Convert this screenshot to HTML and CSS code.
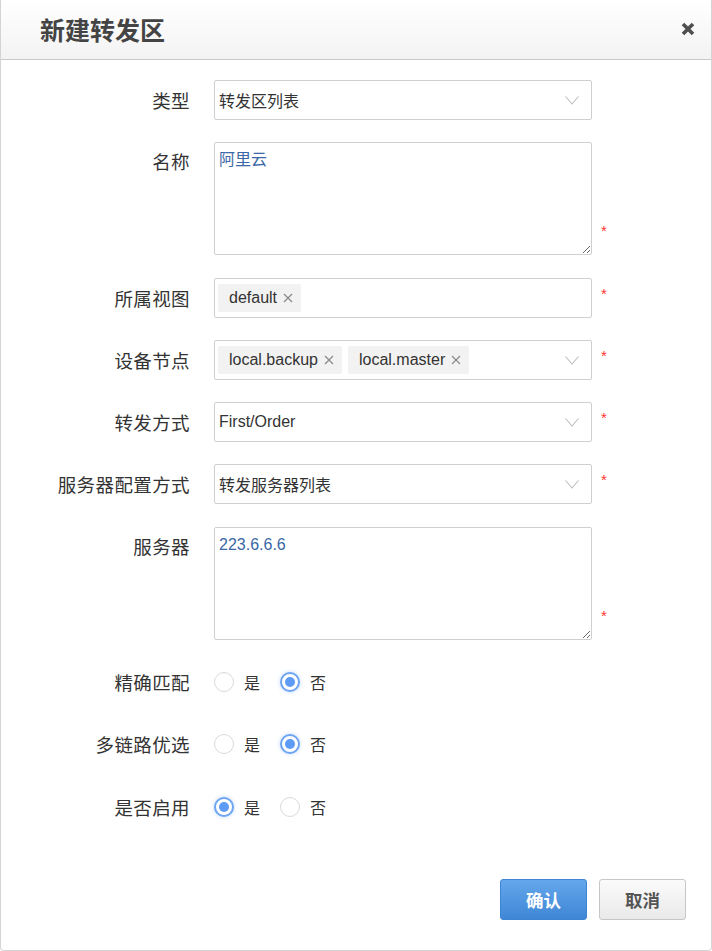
FILE: index.html
```html
<!DOCTYPE html>
<html lang="zh-CN">
<head>
<meta charset="utf-8">
<title>新建转发区</title>
<link rel="stylesheet" href="styles.css">
</head>
<body>
<div class="dialog">
  <div class="dialog-header">
    <h1 class="dialog-title">新建转发区</h1>
    <span class="close" aria-label="关闭">
      <svg width="14" height="14" viewBox="0 0 14 14"><path d="M2 2 L12 12 M12 2 L2 12" stroke="#4f4f4f" stroke-width="3.6" stroke-linecap="butt"/></svg>
    </span>
  </div>
  <div class="dialog-body">
    <div class="row">
      <label class="label">类型</label>
      <div class="control select">
        <span class="value">转发区列表</span>
        <svg class="chev" width="14" height="9" viewBox="0 0 14 9"><path d="M0.5 0.5 L7 8 L13.5 0.5" fill="none" stroke="#bdbdbd" stroke-width="1.1"/></svg>
      </div>
    </div>
    <div class="row">
      <label class="label tall">名称</label>
      <textarea class="control area">阿里云</textarea>
      <span class="star">*</span>
    </div>
    <div class="row">
      <label class="label">所属视图</label>
      <div class="control tags">
        <span class="tag">default<svg class="x" width="10" height="10" viewBox="0 0 10 10"><path d="M1 1 L9 9 M9 1 L1 9" stroke="#8a8a8a" stroke-width="1.2"/></svg></span>
      </div>
      <span class="star">*</span>
    </div>
    <div class="row">
      <label class="label">设备节点</label>
      <div class="control tags select">
        <span class="tag">local.backup<svg class="x" width="10" height="10" viewBox="0 0 10 10"><path d="M1 1 L9 9 M9 1 L1 9" stroke="#8a8a8a" stroke-width="1.2"/></svg></span>
        <span class="tag">local.master<svg class="x" width="10" height="10" viewBox="0 0 10 10"><path d="M1 1 L9 9 M9 1 L1 9" stroke="#8a8a8a" stroke-width="1.2"/></svg></span>
        <svg class="chev" width="14" height="9" viewBox="0 0 14 9"><path d="M0.5 0.5 L7 8 L13.5 0.5" fill="none" stroke="#bdbdbd" stroke-width="1.1"/></svg>
      </div>
      <span class="star">*</span>
    </div>
    <div class="row">
      <label class="label">转发方式</label>
      <div class="control select">
        <span class="value">First/Order</span>
        <svg class="chev" width="14" height="9" viewBox="0 0 14 9"><path d="M0.5 0.5 L7 8 L13.5 0.5" fill="none" stroke="#bdbdbd" stroke-width="1.1"/></svg>
      </div>
      <span class="star">*</span>
    </div>
    <div class="row">
      <label class="label">服务器配置方式</label>
      <div class="control select">
        <span class="value">转发服务器列表</span>
        <svg class="chev" width="14" height="9" viewBox="0 0 14 9"><path d="M0.5 0.5 L7 8 L13.5 0.5" fill="none" stroke="#bdbdbd" stroke-width="1.1"/></svg>
      </div>
      <span class="star">*</span>
    </div>
    <div class="row">
      <label class="label tall">服务器</label>
      <textarea class="control area">223.6.6.6</textarea>
      <span class="star">*</span>
    </div>
    <div class="row">
      <label class="label">精确匹配</label>
      <div class="radios">
        <span class="radio"><span class="dot"></span>是</span>
        <span class="radio"><span class="dot on"></span>否</span>
      </div>
    </div>
    <div class="row">
      <label class="label">多链路优选</label>
      <div class="radios">
        <span class="radio"><span class="dot"></span>是</span>
        <span class="radio"><span class="dot on"></span>否</span>
      </div>
    </div>
    <div class="row">
      <label class="label">是否启用</label>
      <div class="radios">
        <span class="radio"><span class="dot on"></span>是</span>
        <span class="radio"><span class="dot"></span>否</span>
      </div>
    </div>
  </div>
  <div class="dialog-footer">
    <button class="btn primary">确认</button>
    <button class="btn">取消</button>
  </div>
</div>
</body>
</html>
```

FILE: styles.css
```css
* { box-sizing: border-box; }
html, body { margin: 0; padding: 0; }
body {
  font-family: "Liberation Sans", "Noto Sans CJK SC", sans-serif;
  color: #333;
  background: #fff;
}
.dialog {
  height: 951px;
  border: 1px solid #d4d4d4;
  border-top: 0;
  border-radius: 0 0 4px 4px;
  display: flex;
  flex-direction: column;
  background: #fff;
}
.dialog-header {
  height: 60px;
  border-bottom: 1px solid #c9c9c9;
  background: linear-gradient(#ffffff, #f3f3f3);
  display: flex;
  align-items: center;
  justify-content: space-between;
  padding: 0 16px 2px 39px;
}
.dialog-title {
  margin: 0;
  font-family: "Noto Sans CJK SC", sans-serif;
  font-size: 25px;
  font-weight: 700;
  color: #444;
}
.close { display: flex; }
.dialog-body {
  padding-top: 20px;
  display: flex;
  flex-direction: column;
  gap: 22.3px;
}
.row {
  display: flex;
  align-items: flex-start;
}
.label {
  width: 189px;
  text-align: right;
  font-size: 18.5px;
  letter-spacing: 0.4px;
  line-height: 40px;
  color: #333;
  margin-right: 24px;
  font-family: "Noto Sans CJK SC", sans-serif;
}
.label.tall { line-height: 38px; }
.control {
  width: 378px;
  height: 40px;
  border: 1px solid #cfcfcf;
  border-radius: 2px;
  background: #fff;
  font-size: 16px;
  font-family: "Liberation Sans", "Noto Sans CJK SC", sans-serif;
  color: #333;
}
.select {
  display: flex;
  align-items: center;
  padding: 0 12px 0 4px;
}
.select .value { flex: 1; }
.chev { margin-left: auto; margin-top: 1px; }
.area {
  height: 113px;
  resize: vertical;
  padding: 6px 4px;
  color: #3b68a6;
  line-height: 22px;
  display: block;
  outline: none;
}
.tags {
  display: flex;
  align-items: center;
  gap: 6px;
  padding: 0 12px 0 3px;
}
.tag {
  background: #f2f2f2;
  height: 28px;
  line-height: 28px;
  padding: 0 8px 0 11px;
  font-size: 16px;
  color: #333;
  border-radius: 2px;
  display: inline-flex;
  align-items: center;
}
.tag .x { margin-left: 6px; }
.star {
  align-self: flex-end;
  height: 40px;
  margin-left: 9px;
  color: #f33;
  font-size: 15px;
  line-height: 32px;
}
.radios {
  display: flex;
  align-items: center;
  height: 40px;
}
.radio {
  display: flex;
  align-items: center;
  font-size: 16px;
  font-family: "Noto Sans CJK SC", sans-serif;
  color: #333;
  width: 66px;
}
.dot {
  width: 20px;
  height: 20px;
  border-radius: 50%;
  border: 1px solid #dadada;
  margin-right: 10px;
  position: relative;
  background: #fff;
}
.dot.on {
  border: 2px solid #6ea5f3;
  box-shadow: 0 0 4px rgba(90, 150, 240, 0.35);
}
.dot.on::after {
  content: "";
  position: absolute;
  left: 3px;
  top: 3px;
  width: 10px;
  height: 10px;
  border-radius: 50%;
  background: #5d9bf5;
}
.dialog-footer {
  margin-top: auto;
  display: flex;
  justify-content: flex-end;
  gap: 12px;
  padding: 0 25px 30px 0;
}
.btn {
  width: 87px;
  height: 41px;
  border: 1px solid #c6c6c6;
  border-radius: 3px;
  background: linear-gradient(#fbfbfb, #e9e9e9);
  font-family: "Noto Sans CJK SC", sans-serif;
  font-size: 17.5px;
  font-weight: 700;
  color: #555;
  padding: 0;
}
.btn.primary {
  border-color: #3d84d2;
  background: linear-gradient(#64a7ec, #3f86d5);
  color: #fff;
}
```
